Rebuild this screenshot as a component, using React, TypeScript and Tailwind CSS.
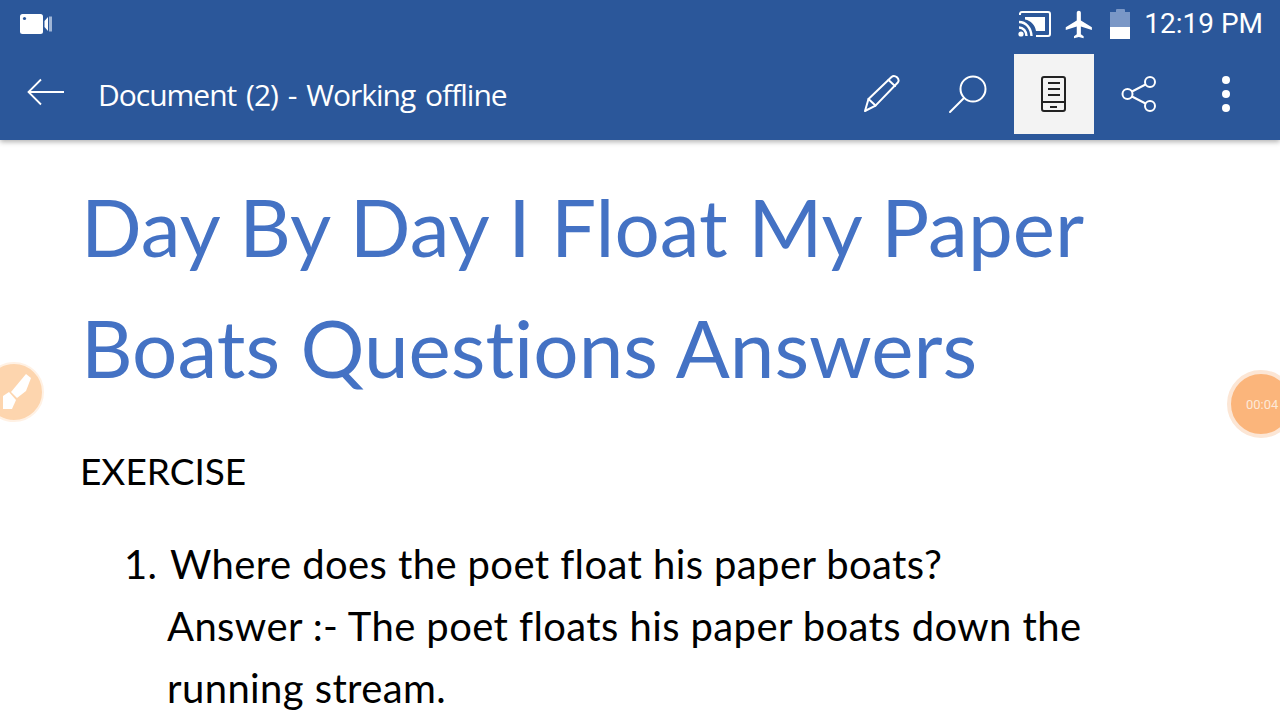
function StatusIcons() {
  return (
    <div className="flex items-center">
      <svg width="34" height="28" viewBox="0 0 34 28" className="mr-[11px]" fill="none">
        <path d="M2 5 V3.5 A2 2 0 0 1 4 2 H30 A2 2 0 0 1 32 4 V24 A2 2 0 0 1 30 26 H18" stroke="white" strokeWidth="2" />
        <path d="M7 7 H27 V21 H18 C17 15 13 10.5 7 9.5 Z" fill="white" />
        <path d="M1 12 C8 12 13 18 13.5 26" stroke="white" strokeWidth="2.4" />
        <path d="M1 17.5 C5 17.5 8.5 21 8.5 26" stroke="white" strokeWidth="2.4" />
        <circle cx="3" cy="24" r="2.6" fill="white" />
      </svg>
      <svg width="33" height="35" viewBox="0 0 24 24" className="mr-[14px]" fill="white">
        <path d="M21 16v-2l-8-5V3.5c0-.83-.67-1.5-1.5-1.5S10 2.67 10 3.5V9l-8 5v2l8-2.5V19l-2 1.5V22l3.5-1 3.5 1v-1.5L13 19v-5.5l8 2.5z" />
      </svg>
      <div className="mr-[14px] flex h-[30px] w-[20px] flex-col items-center">
        <div className="h-[3px] w-[9px] rounded-t-[1px] bg-[#7a97c6]" />
        <div className="h-[15px] w-full bg-[#7a97c6]" />
        <div className="h-[12px] w-full bg-white" />
      </div>
      <span className="text-[28px] leading-none text-white font-['Roboto',sans-serif]">12:19 PM</span>
    </div>
  );
}

function ToolButton({ children, active }: { children: React.ReactNode; active?: boolean }) {
  return (
    <div className={`flex h-[80px] w-[80px] shrink-0 items-center justify-center ${active ? "bg-[#f3f3f3]" : ""}`}>
      {children}
    </div>
  );
}

export default function App() {
  return (
    <div className="relative h-[720px] w-[1280px] overflow-hidden bg-white">
      <header className="relative z-10 h-[140px] bg-[#2b579a] shadow-[0_2px_5px_rgba(0,0,0,0.3)]">
        <div className="flex h-[54px] items-center justify-between pl-[20px] pr-[17px] pb-[6px]">
          <svg width="32" height="22" viewBox="0 0 32 22">
            <rect x="0" y="1" width="23" height="20" rx="2.5" fill="white" />
            <circle cx="4.5" cy="5.5" r="1.6" fill="#2b579a" />
            <path d="M24.5 8 L28 4 V18 L24.5 14 Z" fill="white" />
            <path d="M29 3.5 H32 V18.5 H29 Z" fill="#9fb5d6" />
          </svg>
          <StatusIcons />
        </div>
        <div className="flex h-[86px] items-center pb-[6px]">
          <svg width="38" height="28" viewBox="0 0 38 28" fill="none" stroke="white" strokeWidth="1.8" className="ml-[27px] mb-[5px] shrink-0">
            <path d="M37 14 H2 M14 1.5 L1.5 14 L14 26.5" />
          </svg>
          <span className="ml-[33px] mt-[1px] text-[30px] leading-none text-white font-['Open_Sans',sans-serif] tracking-[-1px] [word-spacing:3px]">
            Document (2) - Working offline
          </span>
          <div className="ml-auto mr-[14px] flex items-center gap-[6px]">
            <ToolButton>
              <svg width="40" height="40" viewBox="0 0 40 40" fill="none" stroke="white" strokeWidth="2" strokeLinejoin="round" strokeLinecap="round">
                <path d="M3 37 L6.5 25 L29.5 3 C31 1.6 33 1.6 35 3.3 C37 5.2 37 7.4 35.6 8.8 L13.5 31.6 Z" />
                <path d="M6.5 25 L13.5 31.6" />
                <path d="M26.5 6 L33 12" />
              </svg>
            </ToolButton>
            <ToolButton>
              <svg width="40" height="40" viewBox="0 0 40 40" fill="none" stroke="white" strokeWidth="2" strokeLinecap="round">
                <circle cx="25" cy="15" r="12.5" />
                <path d="M16 24 L2 38" />
              </svg>
            </ToolButton>
            <ToolButton active>
              <svg width="28" height="38" viewBox="0 0 28 38" fill="none" stroke="#222" strokeWidth="2">
                <rect x="2" y="2" width="23" height="34" rx="2" />
                <path d="M8 8 H20 M8 14 H20 M8 20 H20" />
                <path d="M2 27 H25" />
                <path d="M10 32 H17" />
              </svg>
            </ToolButton>
            <ToolButton>
              <svg width="38" height="38" viewBox="0 0 38 38" fill="none" stroke="white" strokeWidth="2">
                <circle cx="29" cy="7" r="5" />
                <circle cx="6.5" cy="19" r="5" />
                <circle cx="29" cy="31" r="5" />
                <path d="M24.5 9.5 L11 16.5 M11 21.5 L24.5 28.5" />
              </svg>
            </ToolButton>
            <ToolButton>
              <div className="flex flex-col gap-[6px]">
                <div className="h-[8px] w-[8px] rounded-full bg-white" />
                <div className="h-[8px] w-[8px] rounded-full bg-white" />
                <div className="h-[8px] w-[8px] rounded-full bg-white" />
              </div>
            </ToolButton>
          </div>
        </div>
      </header>

      <main className="pl-[81px] pt-[26px] font-['Lato',sans-serif]">
        <h1 className="text-[80px] leading-[121px] text-[#4472c4] font-normal [font-variant-ligatures:none]">
          Day By Day I Float My Paper
          <br />
          Boats Questions Answers
        </h1>
        <p className="-ml-[1px] mt-[32px] text-[37px] leading-[62px] text-black">EXERCISE</p>
        <ol className="mt-[31px] pl-[43px] text-[40px] leading-[62px] tracking-[0.4px] text-black">
          <li className="flex">
            <span className="w-[46px] shrink-0">1.</span>
            <div className="-ml-[3px]">
              <span className="ml-[3px]">Where does the poet float his paper boats?</span>
              <br />
              Answer :- The poet floats his paper boats down the
              <br />
              running stream.
            </div>
          </li>
        </ol>
      </main>

      {/* floating recorder buttons */}
      <div className="absolute left-[-16px] top-[362px] flex h-[60px] w-[60px] items-center justify-center rounded-full border-[2px] border-[#fff1e4] bg-[#fdd5ae]">
        <svg width="34" height="38" viewBox="0 0 34 38" fill="white" className="ml-[10px]">
          <path d="M24 1 L29 5 L24 18 L15 25 L9 19 Z" />
          <path d="M1 23 L7 19 L14 27 L10 36 L1 36 Z" />
        </svg>
      </div>
      <div className="absolute left-[1227px] top-[370px] flex h-[68px] w-[68px] items-center rounded-full border-[4px] border-[#fce6d5] bg-[#fbb57b] pl-[15px]">
        <span className="mt-[1px] text-[13px] leading-none text-[#fde9d8] font-['Roboto',sans-serif]">00:04</span>
      </div>
    </div>
  );
}
